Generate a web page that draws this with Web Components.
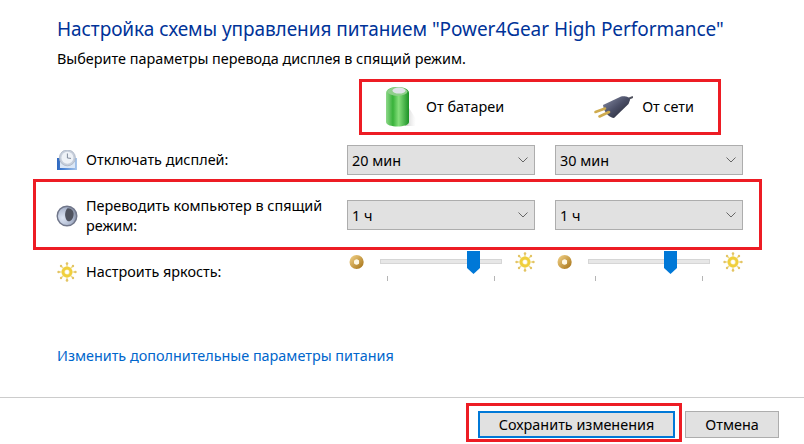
<!DOCTYPE html>
<html lang="ru">
<head>
<meta charset="utf-8">
<title>Электропитание</title>
<style>
  html, body { margin: 0; background: #fff; }
  body { font-family: "Noto Sans", "Open Sans", sans-serif; font-size: 14.4px; color: #000; }
</style>
</head>
<body>
<power-dialog>
  <span slot="title">Настройка схемы управления питанием "Power4Gear High Performance"</span>
  <span slot="subtitle">Выберите параметры перевода дисплея в спящий режим.</span>

  <mark-box slot="sources" style="margin-left:302px;width:356px;height:50px">
    <source-heads></source-heads>
  </mark-box>

  <setting-row slot="rows" icon="clock" label="Отключать дисплей:" style="margin-top:10px">
    <drop-list>20 мин</drop-list>
    <drop-list>30 мин</drop-list>
  </setting-row>

  <mark-box slot="rows" style="margin:4px 0 0 -24px;width:723px;height:65px">
    <setting-row class="tall" icon="moon" label="Переводить компьютер в спящий режим:" style="margin:12px 0 0 21px">
      <drop-list>1 ч</drop-list>
      <drop-list>1 ч</drop-list>
    </setting-row>
  </mark-box>

  <setting-row slot="rows" class="bright" icon="sun" label="Настроить яркость:" style="margin-top:1px">
    <bright-slider pos="87"></bright-slider>
    <bright-slider pos="76"></bright-slider>
  </setting-row>

  <a slot="link" href="#">Изменить дополнительные параметры питания</a>

  <mark-box slot="actions" style="width:210px;height:33px;margin-right:3px">
    <dlg-button primary style="margin:5px 0 0 9px">Сохранить изменения</dlg-button>
  </mark-box>
  <dlg-button slot="actions" style="margin-top:8px">Отмена</dlg-button>
</power-dialog>

<script>
const ICONS = {
  battery: `<svg width="32" height="42" viewBox="0 0 32 42">
    <defs>
      <linearGradient id="b" x1="0" x2="1" y1="0" y2="0">
        <stop offset="0" stop-color="#8fd88a"/><stop offset=".3" stop-color="#38b23a"/>
        <stop offset=".55" stop-color="#86df7c"/><stop offset="1" stop-color="#1b9226"/>
      </linearGradient>
      <linearGradient id="s" x1="0" x2="1" y1="0" y2="0">
        <stop offset="0" stop-color="#999" stop-opacity=".55"/><stop offset="1" stop-color="#ccc" stop-opacity="0"/>
      </linearGradient>
    </defs>
    <path d="M24 22 L31 33 L30 40 L20 40Z" fill="url(#s)"/>
    <path d="M1 7 C1 -1 24 -1 24 7 V36 C24 42 1 42 1 36Z" fill="url(#b)"/>
    <ellipse cx="12.5" cy="5.5" rx="10" ry="4.4" fill="#8fcf8b"/>
    <ellipse cx="14" cy="4.6" rx="6.5" ry="3" fill="#dfe3e8"/>
  </svg>`,
  plug: `<svg width="40" height="24" viewBox="8 8 40 24">
    <defs><linearGradient id="p" x1="0" x2="1" y1="0" y2="1">
      <stop offset="0" stop-color="#8a90a8"/><stop offset=".5" stop-color="#4a4e66"/><stop offset="1" stop-color="#1e2028"/>
    </linearGradient></defs>
    <path d="M43 13 L48 11" stroke="#50525e" stroke-width="2" fill="none"/>
    <path d="M18 19 L36 10.5 C40 9.5 45 11 45 14 L43.5 18 L29 32 C25 32 19 27 18 19Z" fill="url(#p)"/>
    <path d="M10.5 26 L20 22.5" stroke="#cfab4e" stroke-width="2.6" stroke-linecap="round"/>
    <path d="M14.5 30.5 L24 26" stroke="#cfab4e" stroke-width="2.6" stroke-linecap="round"/>
  </svg>`,
  clock: `<svg width="20" height="20" viewBox="0 0 20 20">
    <defs><linearGradient id="c" x1="0" x2="1" y1="0" y2="0">
      <stop offset="0" stop-color="#2f68bf"/><stop offset=".35" stop-color="#4c86d6"/><stop offset="1" stop-color="#a9c6ea"/>
    </linearGradient></defs>
    <path d="M0 8 H20 V20 H0Z" fill="url(#c)"/>
    <path d="M3 9 H18 V18 H3Z" fill="#dbe7f6"/>
    <circle cx="10.4" cy="7.8" r="8" fill="#c6cedb" stroke="#aab4c3" stroke-width=".8"/>
    <circle cx="10.4" cy="7.8" r="6" fill="#eef2f7"/>
    <path d="M10.4 3.5 V8 L14 8.4" stroke="#7f8a9b" fill="none"/>
  </svg>`,
  moon: `<svg width="22" height="22" viewBox="0 0 22 22">
    <defs><radialGradient id="m" cx=".28" cy=".6" r=".75">
      <stop offset="0" stop-color="#dde5f4"/><stop offset=".7" stop-color="#aab5cc"/><stop offset="1" stop-color="#7d8597"/>
    </radialGradient></defs>
    <circle cx="11" cy="11" r="9.8" fill="url(#m)" stroke="#70768a" stroke-width="1.4"/>
    <path d="M11.5 3.2 C15.4 2.8 18 6 17.6 10 C17.2 14 14.4 17 12 16.2 C9 15 7.6 7 11.5 3.2Z" fill="#4f535f"/>
  </svg>`,
  ring: `<svg width="20" height="20" viewBox="0 0 20 20">
    <defs><linearGradient id="r" x1="0" x2="1" y1="0" y2="1">
      <stop offset="0" stop-color="#e8c578"/><stop offset="1" stop-color="#b07f25"/>
    </linearGradient></defs>
    <circle cx="9.6" cy="10" r="4.8" fill="none" stroke="url(#r)" stroke-width="4.6"/>
    <circle cx="9.6" cy="10" r="2.5" fill="#fff8e4"/>
  </svg>`,
  sun: `<svg width="20" height="20" viewBox="0 0 20 20">
    <g stroke="#ecd98e" stroke-width="1.4">
      <path d="M10 2 V5"/><path d="M10 15 V18"/><path d="M2 10 H5"/><path d="M15 10 H18"/>
      <path d="M4 4 L6.5 6.5"/><path d="M16 4 L13.5 6.5"/><path d="M4 16 L6.5 13.5"/><path d="M16 16 L13.5 13.5"/>
    </g>
    <g fill="#e3c463">
      <circle cx="10" cy="1.6" r="1.3"/><circle cx="10" cy="18.4" r="1.3"/>
      <circle cx="1.6" cy="10" r="1.3"/><circle cx="18.4" cy="10" r="1.3"/>
      <circle cx="4" cy="4" r="1.2"/><circle cx="16" cy="4" r="1.2"/>
      <circle cx="4" cy="16" r="1.2"/><circle cx="16" cy="16" r="1.2"/>
    </g>
    <circle cx="10" cy="10" r="5.8" fill="#f8eeb4"/>
    <circle cx="10" cy="10" r="4" fill="none" stroke="#f0cf3c" stroke-width="2.8"/>
    <circle cx="10" cy="10" r="1.9" fill="#fff"/>
  </svg>`
};

class PowerDialog extends HTMLElement {
  constructor() {
    super();
    const shadow = this.attachShadow({ mode: 'open' });
    shadow.innerHTML = `
      <style>
        :host { display: flex; flex-direction: column; width: 804px; height: 444px; overflow: hidden; }
        .main { flex: none; height: 397px; box-sizing: border-box; padding: 15px 0 0 57px; display: flex; flex-direction: column; }
        .title { font-size: 19px; letter-spacing: -0.06px; line-height: 28px; color: #003399; white-space: nowrap; }
        .sub { margin-top: 6px; line-height: 20px; white-space: nowrap; }
        .sources { display: block; margin-top: 10px; }
        .rows { display: flex; flex-direction: column; }
        .link { margin-top: 64px; line-height: 20px; }
        ::slotted(a) { color: #0066cc; text-decoration: none; }
        .footer { flex: 1; border-top: 1px solid #ccc; display: flex; justify-content: flex-end; padding: 5px 25px 0 0; }
      </style>
      <div class="main">
        <div class="title"><slot name="title"></slot></div>
        <div class="sub"><slot name="subtitle"></slot></div>
        <div class="sources"><slot name="sources"></slot></div>
        <div class="rows"><slot name="rows"></slot></div>
        <div class="link"><slot name="link"></slot></div>
      </div>
      <div class="footer"><slot name="actions"></slot></div>
    `;
  }
}

class MarkBox extends HTMLElement {
  constructor() {
    super();
    this.attachShadow({ mode: 'open' }).innerHTML = `
      <style>
        :host { display: block; border: 3px solid #ed1c24; }
      </style>
      <slot></slot>
    `;
  }
}

class SourceHeads extends HTMLElement {
  constructor() {
    super();
    this.attachShadow({ mode: 'open' }).innerHTML = `
      <style>
        :host { display: flex; height: 100%; align-items: center; }
        .item { display: flex; align-items: center; }
        .bat { margin-left: 23px; gap: 9px; }
        .plug { margin-left: 89px; gap: 9px; }
        .plug svg { margin-top: -3px; }
        span { margin-top: -2px; }
        svg { display: block; }
      </style>
      <div class="item bat">${ICONS.battery}<span>От батареи</span></div>
      <div class="item plug">${ICONS.plug}<span>От сети</span></div>
    `;
  }
}

class SettingRow extends HTMLElement {
  constructor() {
    super();
    const icon = this.getAttribute('icon');
    const label = this.getAttribute('label');
    this.attachShadow({ mode: 'open' }).innerHTML = `
      <style>
        :host { display: grid; grid-template-columns: 270px 188px 188px; column-gap: 20px; align-items: center; }
        :host(.bright) { align-items: start; }
        :host(.bright) .label { margin-top: 11px; }
        :host(.tall) .label { padding-top: 2px; margin-left: -1px; gap: 8px; }
        .label { display: flex; align-items: center; gap: 9px; line-height: 20px; }
        .label svg { flex: none; display: block; }
        .text { width: 241px; }
        slot { display: contents; }
      </style>
      <div class="label">${ICONS[icon]}<span class="text">${label}</span></div>
      <slot></slot>
    `;
  }
}

class DropList extends HTMLElement {
  constructor() {
    super();
    this.attachShadow({ mode: 'open' }).innerHTML = `
      <style>
        :host { display: flex; align-items: center; justify-content: space-between; box-sizing: border-box; height: 30px; padding: 0 6px 0 4px; background: #e1e1e1; border: 1px solid #adadad; }
        svg { display: block; }
      </style>
      <span><slot></slot></span>
      <svg width="10" height="6" viewBox="0 0 10 6"><path d="M.5 .5 L5 5 L9.5 .5" fill="none" stroke="#666"/></svg>
    `;
  }
}

class BrightSlider extends HTMLElement {
  constructor() {
    super();
    const pos = this.getAttribute('pos');
    this.attachShadow({ mode: 'open' }).innerHTML = `
      <style>
        :host { display: flex; justify-content: space-between; height: 30px; }
        svg { display: block; margin-top: 1px; }
        .scale { position: relative; width: 122px; }
        .bar { height: 5px; margin-top: 8px; box-sizing: border-box; background: #e7e7e7; border: 1px solid #d6d6d6; }
        .ticks { display: flex; justify-content: space-between; padding: 0 7px; margin-top: 12px; }
        .ticks i { width: 1px; height: 5px; background: #b5b5b5; }
        .thumb { position: absolute; top: 0; left: ${pos}px; width: 13px; height: 23px; background: #0078d7; clip-path: polygon(0 0, 100% 0, 100% 74%, 50% 100%, 0 74%); }
      </style>
      ${ICONS.ring}
      <div class="scale">
        <div class="bar"></div>
        <div class="ticks"><i></i><i></i></div>
        <div class="thumb"></div>
      </div>
      ${ICONS.sun}
    `;
  }
}

class DlgButton extends HTMLElement {
  constructor() {
    super();
    const primary = this.hasAttribute('primary');
    this.attachShadow({ mode: 'open' }).innerHTML = `
      <style>
        :host { display: flex; align-items: center; justify-content: center; box-sizing: border-box; height: 27px; background: #e1e1e1; width: ${primary ? 197 : 94}px;
          border: ${primary ? '2px solid #0078d7' : '1px solid #adadad'}; }
      </style>
      <slot></slot>
    `;
  }
}

customElements.define('power-dialog', PowerDialog);
customElements.define('mark-box', MarkBox);
customElements.define('source-heads', SourceHeads);
customElements.define('setting-row', SettingRow);
customElements.define('drop-list', DropList);
customElements.define('bright-slider', BrightSlider);
customElements.define('dlg-button', DlgButton);
</script>
</body>
</html>
